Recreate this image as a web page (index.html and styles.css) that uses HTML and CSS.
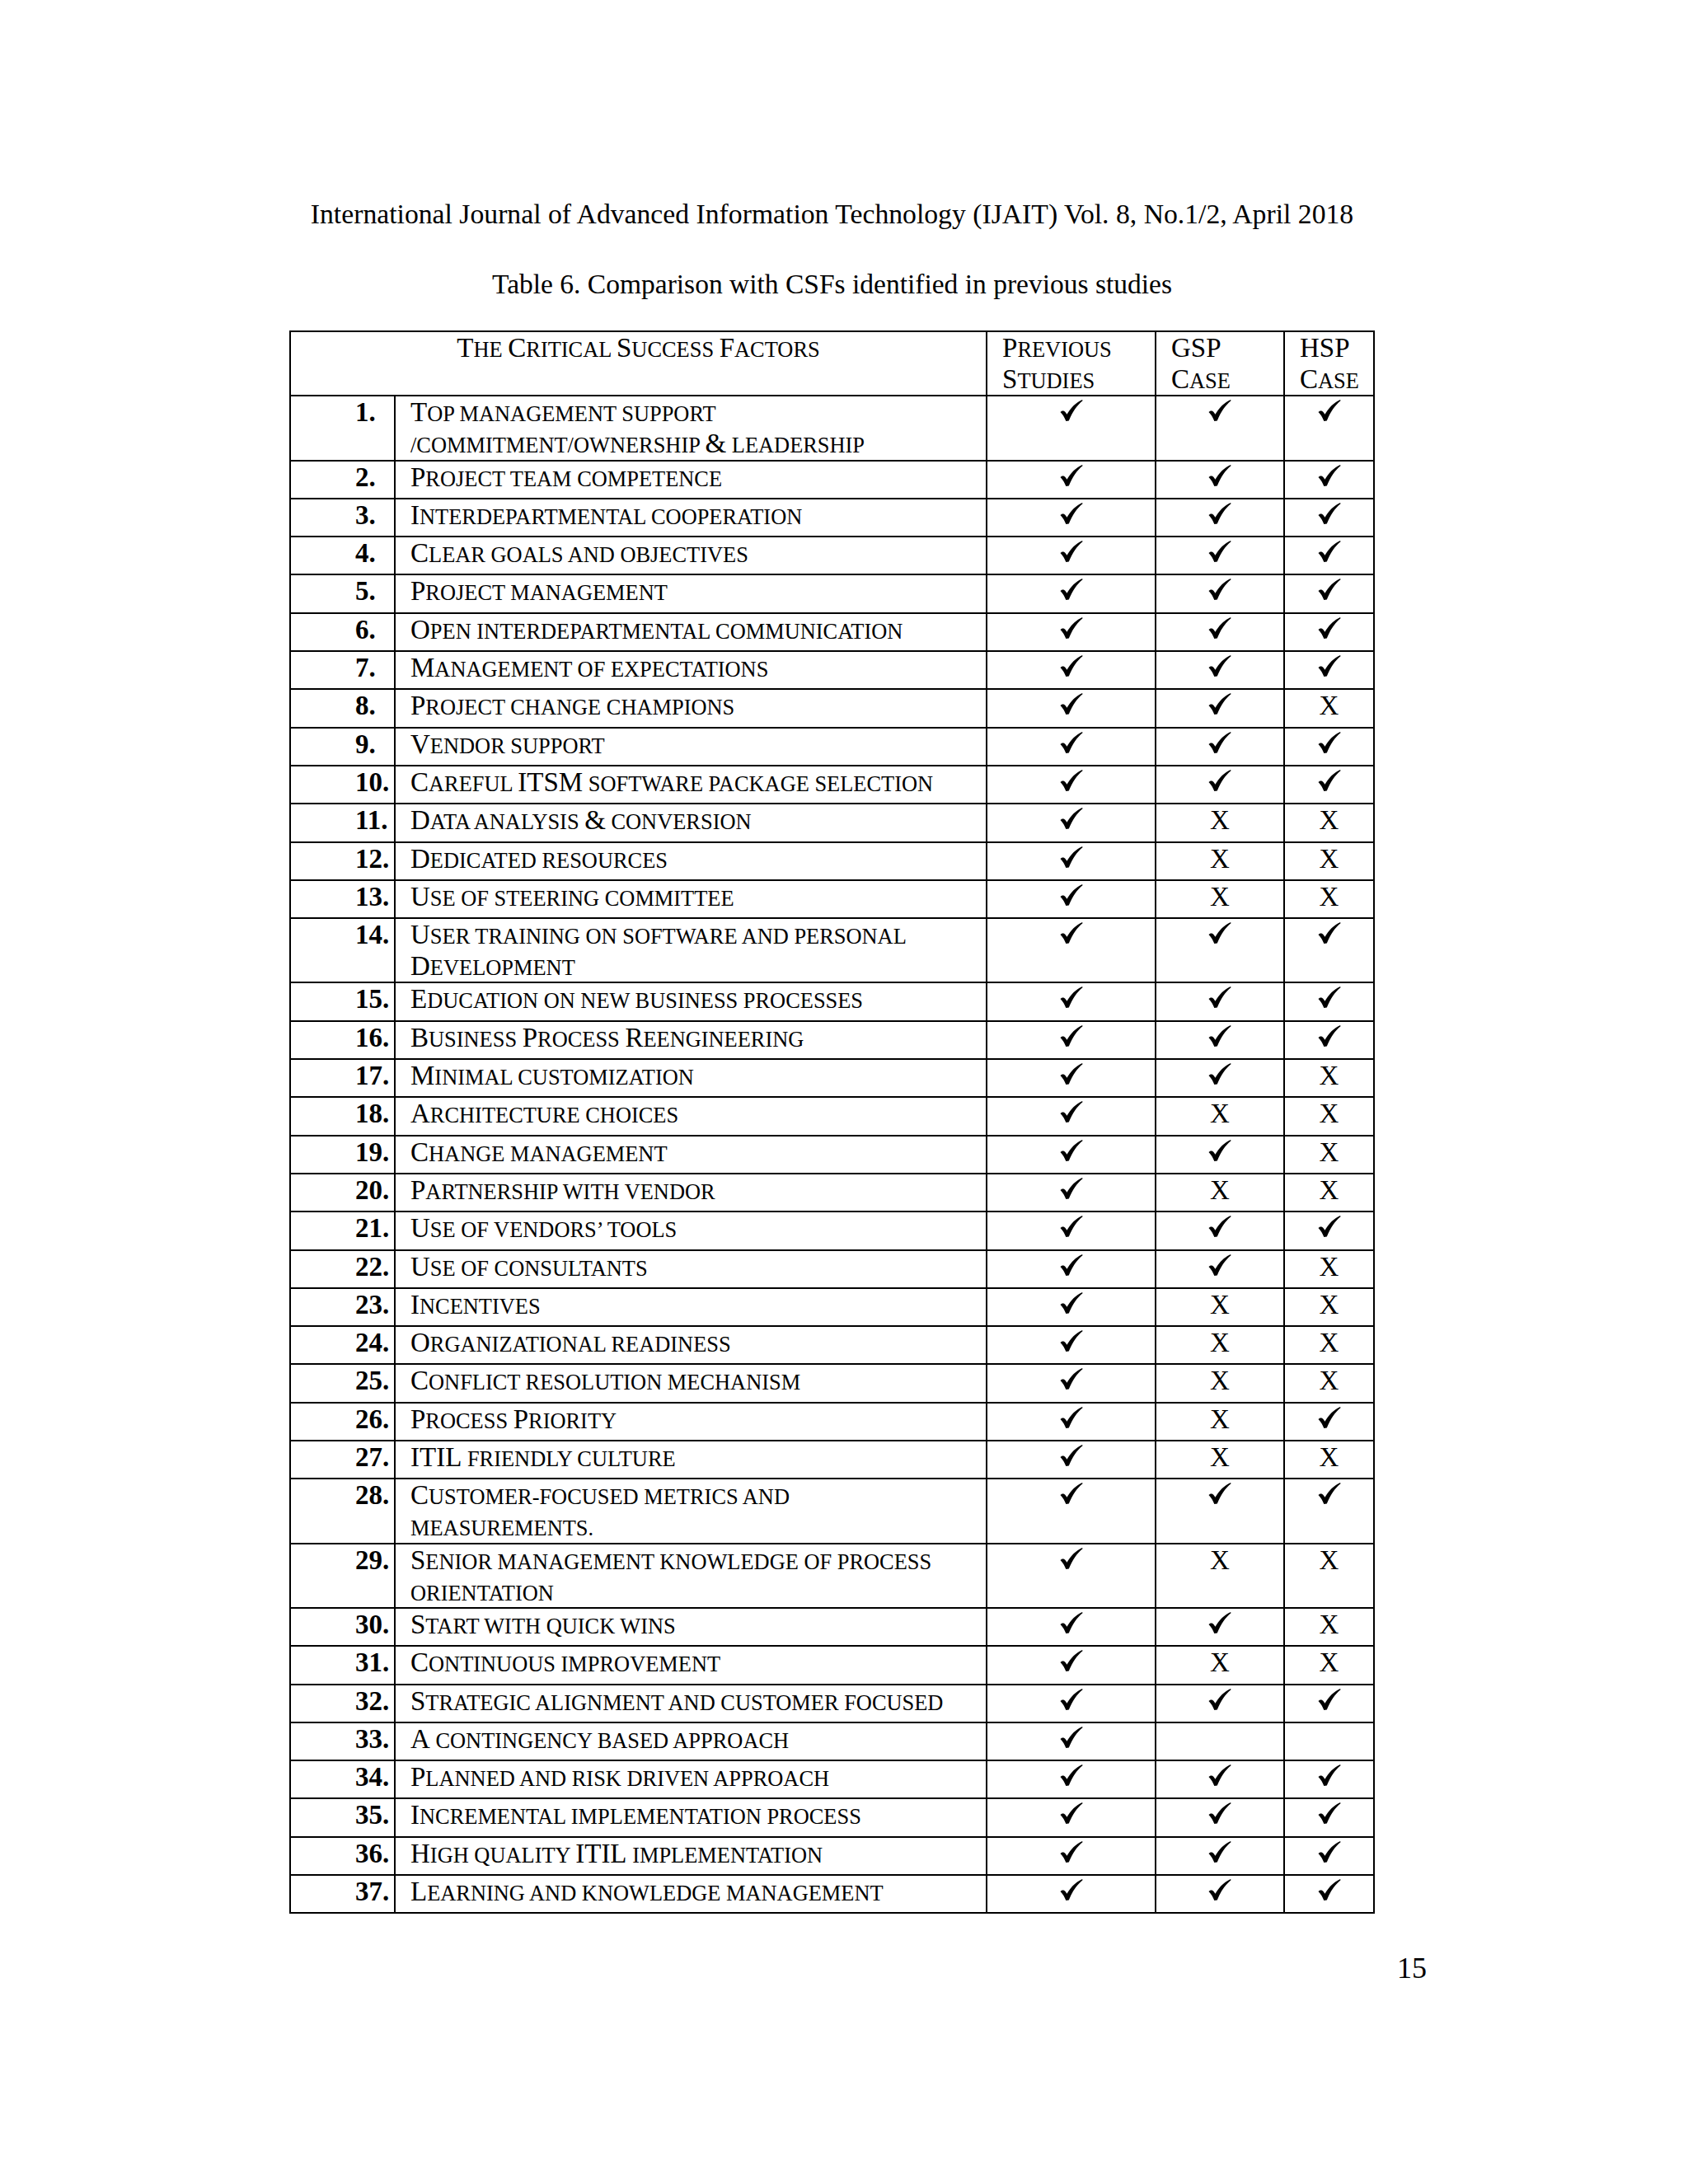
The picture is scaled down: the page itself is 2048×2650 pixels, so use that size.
FILE: index.html
```html
<!DOCTYPE html>
<html lang="en">
<head>
<meta charset="utf-8">
<title>IJAIT Table 6</title>
<link rel="stylesheet" href="styles.css">
</head>
<body>
<svg width="0" height="0" class="defs" aria-hidden="true">
  <defs>
    <symbol id="tick" viewBox="0 0 27 26">
      <path d="M0 15 C1.5 13.2 4 12.8 5.8 14.8 L8 17.8 C12.5 9.8 18.5 3.8 26.6 0 L27 1.2 C20.5 6.5 14.6 14.5 10.3 25.6 L6.8 26 C5.2 21.8 3 18 0 15 Z"/>
    </symbol>
  </defs>
</svg>
<div class="sheet">
  <p class="running-head">International Journal of Advanced Information Technology (IJAIT) Vol. 8, No.1/2, April 2018</p>
  <p class="caption">Table 6. Comparison with CSFs identified in previous studies</p>
  <table class="csf-table">
    <colgroup>
      <col class="c-num"><col class="c-text"><col class="c-prev"><col class="c-gsp"><col class="c-hsp">
    </colgroup>
    <thead>
      <tr class="dbl">
        <th colspan="2" class="h-title">T<span class="sc">he </span>C<span class="sc">ritical </span>S<span class="sc">uccess </span>F<span class="sc">actors</span></th>
        <th class="h-col">P<span class="sc">revious</span><br>S<span class="sc">tudies</span></th>
        <th class="h-col">GSP<br>C<span class="sc">ase</span></th>
        <th class="h-col">HSP<br>C<span class="sc">ase</span></th>
      </tr>
    </thead>
    <tbody>
      <tr class="dbl"><td class="num">1.</td><td class="txt">T<span class="sc">op management support</span><br><span class="sc">/commitment/ownership </span>&amp;<span class="sc"> leadership</span></td><td class="mk"><svg class="ck"><use href="#tick"/></svg></td><td class="mk"><svg class="ck"><use href="#tick"/></svg></td><td class="mk"><svg class="ck"><use href="#tick"/></svg></td></tr>
      <tr><td class="num">2.</td><td class="txt">P<span class="sc">roject team competence</span></td><td class="mk"><svg class="ck"><use href="#tick"/></svg></td><td class="mk"><svg class="ck"><use href="#tick"/></svg></td><td class="mk"><svg class="ck"><use href="#tick"/></svg></td></tr>
      <tr><td class="num">3.</td><td class="txt">I<span class="sc">nterdepartmental cooperation</span></td><td class="mk"><svg class="ck"><use href="#tick"/></svg></td><td class="mk"><svg class="ck"><use href="#tick"/></svg></td><td class="mk"><svg class="ck"><use href="#tick"/></svg></td></tr>
      <tr><td class="num">4.</td><td class="txt">C<span class="sc">lear goals and objectives</span></td><td class="mk"><svg class="ck"><use href="#tick"/></svg></td><td class="mk"><svg class="ck"><use href="#tick"/></svg></td><td class="mk"><svg class="ck"><use href="#tick"/></svg></td></tr>
      <tr><td class="num">5.</td><td class="txt">P<span class="sc">roject management</span></td><td class="mk"><svg class="ck"><use href="#tick"/></svg></td><td class="mk"><svg class="ck"><use href="#tick"/></svg></td><td class="mk"><svg class="ck"><use href="#tick"/></svg></td></tr>
      <tr><td class="num">6.</td><td class="txt">O<span class="sc">pen interdepartmental communication</span></td><td class="mk"><svg class="ck"><use href="#tick"/></svg></td><td class="mk"><svg class="ck"><use href="#tick"/></svg></td><td class="mk"><svg class="ck"><use href="#tick"/></svg></td></tr>
      <tr><td class="num">7.</td><td class="txt">M<span class="sc">anagement of expectations</span></td><td class="mk"><svg class="ck"><use href="#tick"/></svg></td><td class="mk"><svg class="ck"><use href="#tick"/></svg></td><td class="mk"><svg class="ck"><use href="#tick"/></svg></td></tr>
      <tr><td class="num">8.</td><td class="txt">P<span class="sc">roject change champions</span></td><td class="mk"><svg class="ck"><use href="#tick"/></svg></td><td class="mk"><svg class="ck"><use href="#tick"/></svg></td><td class="mk">X</td></tr>
      <tr><td class="num">9.</td><td class="txt">V<span class="sc">endor support</span></td><td class="mk"><svg class="ck"><use href="#tick"/></svg></td><td class="mk"><svg class="ck"><use href="#tick"/></svg></td><td class="mk"><svg class="ck"><use href="#tick"/></svg></td></tr>
      <tr><td class="num">10.</td><td class="txt">C<span class="sc">areful </span>ITSM<span class="sc"> software package selection</span></td><td class="mk"><svg class="ck"><use href="#tick"/></svg></td><td class="mk"><svg class="ck"><use href="#tick"/></svg></td><td class="mk"><svg class="ck"><use href="#tick"/></svg></td></tr>
      <tr><td class="num">11.</td><td class="txt">D<span class="sc">ata analysis </span>&amp;<span class="sc"> conversion</span></td><td class="mk"><svg class="ck"><use href="#tick"/></svg></td><td class="mk">X</td><td class="mk">X</td></tr>
      <tr><td class="num">12.</td><td class="txt">D<span class="sc">edicated resources</span></td><td class="mk"><svg class="ck"><use href="#tick"/></svg></td><td class="mk">X</td><td class="mk">X</td></tr>
      <tr><td class="num">13.</td><td class="txt">U<span class="sc">se of steering committee</span></td><td class="mk"><svg class="ck"><use href="#tick"/></svg></td><td class="mk">X</td><td class="mk">X</td></tr>
      <tr class="dbl"><td class="num">14.</td><td class="txt">U<span class="sc">ser training on software and personal</span><br>D<span class="sc">evelopment</span></td><td class="mk"><svg class="ck"><use href="#tick"/></svg></td><td class="mk"><svg class="ck"><use href="#tick"/></svg></td><td class="mk"><svg class="ck"><use href="#tick"/></svg></td></tr>
      <tr><td class="num">15.</td><td class="txt">E<span class="sc">ducation on new business processes</span></td><td class="mk"><svg class="ck"><use href="#tick"/></svg></td><td class="mk"><svg class="ck"><use href="#tick"/></svg></td><td class="mk"><svg class="ck"><use href="#tick"/></svg></td></tr>
      <tr><td class="num">16.</td><td class="txt">B<span class="sc">usiness </span>P<span class="sc">rocess </span>R<span class="sc">eengineering</span></td><td class="mk"><svg class="ck"><use href="#tick"/></svg></td><td class="mk"><svg class="ck"><use href="#tick"/></svg></td><td class="mk"><svg class="ck"><use href="#tick"/></svg></td></tr>
      <tr><td class="num">17.</td><td class="txt">M<span class="sc">inimal customization</span></td><td class="mk"><svg class="ck"><use href="#tick"/></svg></td><td class="mk"><svg class="ck"><use href="#tick"/></svg></td><td class="mk">X</td></tr>
      <tr><td class="num">18.</td><td class="txt">A<span class="sc">rchitecture choices</span></td><td class="mk"><svg class="ck"><use href="#tick"/></svg></td><td class="mk">X</td><td class="mk">X</td></tr>
      <tr><td class="num">19.</td><td class="txt">C<span class="sc">hange management</span></td><td class="mk"><svg class="ck"><use href="#tick"/></svg></td><td class="mk"><svg class="ck"><use href="#tick"/></svg></td><td class="mk">X</td></tr>
      <tr><td class="num">20.</td><td class="txt">P<span class="sc">artnership with vendor</span></td><td class="mk"><svg class="ck"><use href="#tick"/></svg></td><td class="mk">X</td><td class="mk">X</td></tr>
      <tr><td class="num">21.</td><td class="txt">U<span class="sc">se of vendors’ tools</span></td><td class="mk"><svg class="ck"><use href="#tick"/></svg></td><td class="mk"><svg class="ck"><use href="#tick"/></svg></td><td class="mk"><svg class="ck"><use href="#tick"/></svg></td></tr>
      <tr><td class="num">22.</td><td class="txt">U<span class="sc">se of consultants</span></td><td class="mk"><svg class="ck"><use href="#tick"/></svg></td><td class="mk"><svg class="ck"><use href="#tick"/></svg></td><td class="mk">X</td></tr>
      <tr><td class="num">23.</td><td class="txt">I<span class="sc">ncentives</span></td><td class="mk"><svg class="ck"><use href="#tick"/></svg></td><td class="mk">X</td><td class="mk">X</td></tr>
      <tr><td class="num">24.</td><td class="txt">O<span class="sc">rganizational readiness</span></td><td class="mk"><svg class="ck"><use href="#tick"/></svg></td><td class="mk">X</td><td class="mk">X</td></tr>
      <tr><td class="num">25.</td><td class="txt">C<span class="sc">onflict resolution mechanism</span></td><td class="mk"><svg class="ck"><use href="#tick"/></svg></td><td class="mk">X</td><td class="mk">X</td></tr>
      <tr><td class="num">26.</td><td class="txt">P<span class="sc">rocess </span>P<span class="sc">riority</span></td><td class="mk"><svg class="ck"><use href="#tick"/></svg></td><td class="mk">X</td><td class="mk"><svg class="ck"><use href="#tick"/></svg></td></tr>
      <tr><td class="num">27.</td><td class="txt">ITIL<span class="sc"> friendly culture</span></td><td class="mk"><svg class="ck"><use href="#tick"/></svg></td><td class="mk">X</td><td class="mk">X</td></tr>
      <tr class="dbl"><td class="num">28.</td><td class="txt">C<span class="sc">ustomer-focused metrics and</span><br><span class="sc">measurements.</span></td><td class="mk"><svg class="ck"><use href="#tick"/></svg></td><td class="mk"><svg class="ck"><use href="#tick"/></svg></td><td class="mk"><svg class="ck"><use href="#tick"/></svg></td></tr>
      <tr class="dbl"><td class="num">29.</td><td class="txt">S<span class="sc">enior management knowledge of process</span><br><span class="sc">orientation</span></td><td class="mk"><svg class="ck"><use href="#tick"/></svg></td><td class="mk">X</td><td class="mk">X</td></tr>
      <tr><td class="num">30.</td><td class="txt">S<span class="sc">tart with quick wins</span></td><td class="mk"><svg class="ck"><use href="#tick"/></svg></td><td class="mk"><svg class="ck"><use href="#tick"/></svg></td><td class="mk">X</td></tr>
      <tr><td class="num">31.</td><td class="txt">C<span class="sc">ontinuous improvement</span></td><td class="mk"><svg class="ck"><use href="#tick"/></svg></td><td class="mk">X</td><td class="mk">X</td></tr>
      <tr><td class="num">32.</td><td class="txt">S<span class="sc">trategic alignment and customer focused</span></td><td class="mk"><svg class="ck"><use href="#tick"/></svg></td><td class="mk"><svg class="ck"><use href="#tick"/></svg></td><td class="mk"><svg class="ck"><use href="#tick"/></svg></td></tr>
      <tr><td class="num">33.</td><td class="txt">A<span class="sc"> contingency based approach</span></td><td class="mk"><svg class="ck"><use href="#tick"/></svg></td><td class="mk"></td><td class="mk"></td></tr>
      <tr><td class="num">34.</td><td class="txt">P<span class="sc">lanned and risk driven approach</span></td><td class="mk"><svg class="ck"><use href="#tick"/></svg></td><td class="mk"><svg class="ck"><use href="#tick"/></svg></td><td class="mk"><svg class="ck"><use href="#tick"/></svg></td></tr>
      <tr><td class="num">35.</td><td class="txt">I<span class="sc">ncremental implementation process</span></td><td class="mk"><svg class="ck"><use href="#tick"/></svg></td><td class="mk"><svg class="ck"><use href="#tick"/></svg></td><td class="mk"><svg class="ck"><use href="#tick"/></svg></td></tr>
      <tr><td class="num">36.</td><td class="txt">H<span class="sc">igh quality </span>ITIL<span class="sc"> implementation</span></td><td class="mk"><svg class="ck"><use href="#tick"/></svg></td><td class="mk"><svg class="ck"><use href="#tick"/></svg></td><td class="mk"><svg class="ck"><use href="#tick"/></svg></td></tr>
      <tr><td class="num">37.</td><td class="txt">L<span class="sc">earning and knowledge management</span></td><td class="mk"><svg class="ck"><use href="#tick"/></svg></td><td class="mk"><svg class="ck"><use href="#tick"/></svg></td><td class="mk"><svg class="ck"><use href="#tick"/></svg></td></tr>
    </tbody>
  </table>
  <p class="folio">15</p>
</div>
</body>
</html>
```

FILE: styles.css
```css
html, body {
  margin: 0;
  padding: 0;
  background: #ffffff;
}

body {
  width: 2048px;
  height: 2650px;
  font-family: "Liberation Serif", "Times New Roman", serif;
  color: #000000;
  overflow: hidden;
}

.defs {
  position: absolute;
  width: 0;
  height: 0;
  overflow: hidden;
}

.sheet {
  margin-left: 351px;
  width: 1317px;
  padding-top: 237px;
}

.running-head {
  margin: 0;
  font-size: 33.7px;
  line-height: 46px;
  text-align: center;
  white-space: nowrap;
}

.caption {
  margin: 39px 0 0;
  font-size: 33.5px;
  line-height: 46px;
  text-align: center;
  white-space: nowrap;
}

.csf-table {
  margin-top: 33px;
  width: 1317px;
  border-collapse: collapse;
  table-layout: fixed;
  font-size: 33px;
  line-height: 38px;
}

.c-num { width: 127px; }
.c-text { width: 718px; }
.c-prev { width: 205px; }
.c-gsp { width: 156px; }
.c-hsp { width: 109px; }

.csf-table th,
.csf-table td {
  border: 2px solid #000000;
  padding: 0;
  vertical-align: top;
  height: 44.3px;
  white-space: nowrap;
  font-weight: normal;
}

.csf-table tr.dbl th,
.csf-table tr.dbl td {
  height: 76.3px;
}

.h-title {
  text-align: center;
}

.h-col {
  text-align: left;
  padding-left: 18px !important;
}

.num {
  font-weight: bold !important;
  padding-left: 78px !important;
  text-align: left;
}

.txt {
  padding-left: 18px !important;
  text-align: left;
}

.mk {
  text-align: center;
}

.sc {
  font-size: 0.8em;
  line-height: 1;
  text-transform: uppercase;
}

.ck {
  width: 28px;
  height: 26px;
  vertical-align: baseline;
  fill: #000000;
}

.folio {
  margin: 45px 0 0;
  width: 1380px;
  font-size: 36px;
  line-height: 42px;
  text-align: right;
}
```
